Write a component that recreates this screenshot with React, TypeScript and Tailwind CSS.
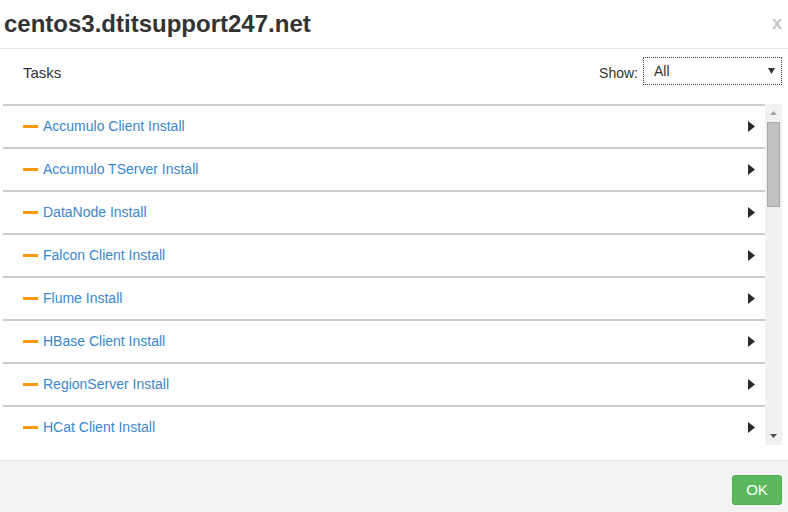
import React from "react";

const tasks = [
  "Accumulo Client Install",
  "Accumulo TServer Install",
  "DataNode Install",
  "Falcon Client Install",
  "Flume Install",
  "HBase Client Install",
  "RegionServer Install",
  "HCat Client Install",
];

function Arrow() {
  return (
    <svg width="7" height="11" viewBox="0 0 7 11" className="shrink-0">
      <polygon points="0,0 7,5.5 0,11" fill="#2a2a2a" />
    </svg>
  );
}

export default function App() {
  return (
    <div className="flex h-[512px] w-[788px] flex-col bg-white font-['Liberation_Sans',Arial,sans-serif] text-[#333]">
      {/* header */}
      <div className="flex h-[49px] shrink-0 items-center justify-between border-b border-[#e5e5e5] pl-[4px] pr-[6px]">
        <h1 className="text-[24px] font-bold leading-[48px] text-[#333]">centos3.dtitsupport247.net</h1>
        <span className="-mt-[2px] text-[18px] font-bold leading-none text-[#c8c8c8]">x</span>
      </div>

      {/* toolbar */}
      <div className="flex shrink-0 items-center justify-between pb-[19px] pl-[23px] pr-[6px] pt-[8px]">
        <span className="mt-[5px] text-[15px]">Tasks</span>
        <div className="flex items-center">
          <span className="mr-[5px] mt-[5px] text-[14px]">Show:</span>
          <div className="flex h-[28px] w-[139px] items-center justify-between border border-dotted border-[#444] pl-[10px] pr-[6px]">
            <span className="text-[14px]">All</span>
            <svg width="7" height="6" viewBox="0 0 7 6">
              <polygon points="0,0 7,0 3.5,6" fill="#333" />
            </svg>
          </div>
        </div>
      </div>

      {/* list */}
      <div className="ml-[3px] mr-[6px] flex h-[341px] shrink-0">
        <div className="flex-1 overflow-hidden">
          {tasks.map((t) => (
            <div
              key={t}
              className="flex h-[43px] items-center justify-between border-t-2 border-[#cccccc] pl-[20px] pr-[10px]"
            >
              <div className="flex items-center">
                <span className="h-[3px] w-[15px] bg-[#fb9a12]" />
                <span className="ml-[5px] text-[14px] text-[#3a87cd]">{t}</span>
              </div>
              <Arrow />
            </div>
          ))}
        </div>
        {/* scrollbar */}
        <div className="flex w-[17px] flex-col items-center bg-[#f1f1f1]">
          <div className="flex h-[18px] w-full items-center justify-center">
            <svg width="7" height="4" viewBox="0 0 7 4">
              <polygon points="0,4 7,4 3.5,0" fill="#a3a3a3" />
            </svg>
          </div>
          <div className="h-[85px] w-[13px] border border-[#a8a8a8] bg-[#c1c1c1]" />
          <div className="flex-1" />
          <div className="flex h-[18px] w-full items-center justify-center">
            <svg width="7" height="4" viewBox="0 0 7 4">
              <polygon points="0,0 7,0 3.5,4" fill="#505050" />
            </svg>
          </div>
        </div>
      </div>

      <div className="flex-1" />

      {/* footer */}
      <div className="flex h-[52px] shrink-0 justify-end border-t border-[#e5e5e5] bg-[#f3f3f3] pr-[6px] pt-[14px]">
        <button className="h-[30px] w-[50px] rounded-[3px] border border-[#4cae4c] bg-[#5cb85c] text-[15px] text-white">
          OK
        </button>
      </div>
    </div>
  );
}
